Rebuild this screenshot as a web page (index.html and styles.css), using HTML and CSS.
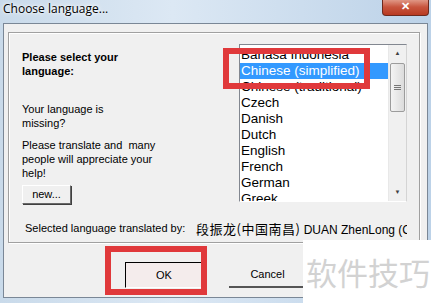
FILE: index.html
```html
<!DOCTYPE html>
<html lang="en">
<head>
  <meta charset="UTF-8">
  <title>Choose language...</title>
  <link rel="stylesheet" href="styles.css">
</head>
<body>
  <div class="window">
    <div class="titlebar">
      <span class="title">Choose language...</span>
      <div class="close-btn">&#x2715;</div>
    </div>

    <div class="client">
      <div class="group">
        <div class="group-top">
          <div class="left-col">
            <p class="prompt">Please select your language:</p>
            <p class="info">Your language is<br>missing?</p>
            <p class="info">Please translate and &nbsp;many people will appreciate your help!</p>
            <button class="btn btn-new">new...</button>
          </div>

          <div class="listbox">
            <ul class="items">
              <li>Bahasa Indonesia</li>
              <li class="selected">Chinese (simplified)</li>
              <li>Chinese (traditional)</li>
              <li>Czech</li>
              <li>Danish</li>
              <li>Dutch</li>
              <li>English</li>
              <li>French</li>
              <li>German</li>
              <li>Greek</li>
            </ul>
            <div class="scrollbar">
              <div class="arrow">&#9650;</div>
              <div class="track">
                <div class="thumb"><span class="grip"></span></div>
              </div>
              <div class="arrow">&#9660;</div>
            </div>
          </div>
        </div>

        <div class="translator">
          <span class="label">Selected language translated by:</span>
          <span class="name"><span class="cjk">段振龙(中国南昌)</span> DUAN ZhenLong (China)</span>
        </div>
      </div>

      <div class="buttons">
        <button class="btn btn-ok">OK</button>
        <button class="btn btn-cancel">Cancel</button>
      </div>
    </div>

    <!-- red marks over the screenshot -->
    <div class="mark mark-list"></div>
    <div class="mark mark-ok"></div>

    <div class="watermark">软件技巧</div>
  </div>
</body>
</html>
```

FILE: styles.css
```css
/* window */
body {
  margin: 0;
  width: 431px;
  height: 303px;
  overflow: hidden;
  font-family: 'Liberation Sans', Arial, sans-serif;
  font-size: 11px;
  color: #000;
}

.window {
  position: relative;
  width: 431px;
  height: 303px;
  background: linear-gradient(90deg, #c9daea 0%, #dce8f4 40%, #bcd2e8 100%);
  display: flex;
  flex-direction: column;
}

.titlebar {
  height: 23px;
  display: flex;
  align-items: flex-start;
  justify-content: space-between;
  padding: 0 2px 0 3px;
}

.title {
  font-family: 'Open Sans', 'DejaVu Sans', sans-serif;
  font-size: 12px;
  line-height: 12px;
  margin-top: 3px;
  text-shadow: 0 0 6px #fff, 0 0 3px #fff;
}

.close-btn {
  width: 45px;
  height: 16px;
  margin-top: -1px;
  background: linear-gradient(#e3a08f, #c8553e 50%, #b83a22);
  border: 1px solid #6d2a1e;
  border-top: none;
  border-radius: 0 0 4px 4px;
  color: #fff;
  font-size: 11px;
  font-weight: bold;
  text-align: center;
  line-height: 15px;
}

.client {
  flex: 1;
  margin: 0 3px 5px 3px;
  background: #f0f0f0;
  border: 1px solid #7a8796;
  padding: 8px 7px 0 4px;
  display: flex;
  flex-direction: column;
}

.group {
  height: 211px;
  box-sizing: border-box;
  border: 1px solid #a0a0a0;
  box-shadow: inset 1px 1px 0 #fff, 1px 1px 0 #fff;
  display: flex;
  flex-direction: column;
  padding: 11px 12px 0 13px;
}

.group-top {
  display: flex;
  justify-content: space-between;
}

.left-col {
  width: 190px;
  padding-top: 6px;
}

.left-col p {
  margin: 0;
  line-height: 14px;
}

.prompt {
  font-weight: bold;
  width: 130px;
  margin-bottom: 24px !important;
}

.info {
  width: 140px;
  margin-bottom: 8px !important;
}

.btn {
  font-family: 'Liberation Sans', Arial, sans-serif;
  font-size: 11px;
  background: #f0f0f0;
  border: 1px solid #fff;
  border-right-color: #696969;
  border-bottom-color: #696969;
  box-shadow: 1px 1px 0 #404040;
  padding: 0;
  color: #000;
}

.btn-new {
  width: 49px;
  height: 19px;
  margin-top: -4px;
}

/* language list */
.listbox {
  width: 166px;
  height: 156px;
  border: 1px solid #828790;
  border-right-color: #d4d4d4;
  border-bottom-color: #fff;
  background: #fff;
  display: flex;
  overflow: hidden;
}

.items {
  list-style: none;
  margin: 0;
  padding: 2px 0 0 0;
  flex: 1;
  font-size: 13.5px;
}

.items li {
  height: 16px;
  line-height: 16px;
  padding-left: 1px;
  white-space: nowrap;
  overflow: hidden;
}

.items li.selected {
  background: #3399ff;
  color: #fff;
}

.scrollbar {
  width: 17px;
  background: #f0f0f0;
  display: flex;
  flex-direction: column;
  border-left: 1px solid #e8e8e8;
}

.arrow {
  height: 17px;
  font-size: 6px;
  line-height: 17px;
  text-align: center;
  color: #404040;
}

.track {
  flex: 1;
}

.thumb {
  height: 47px;
  margin: 1px 1px 0 1px;
  border: 1px solid #9c9c9c;
  border-radius: 2px;
  background: linear-gradient(90deg, #f4f4f4, #dcdcdc);
  display: flex;
  align-items: center;
  justify-content: center;
}

.grip {
  width: 7px;
  height: 5px;
  border-top: 1px solid #777;
  border-bottom: 1px solid #777;
  box-sizing: border-box;
  background: linear-gradient(#777, #777) center / 100% 1px no-repeat;
}

.translator {
  display: flex;
  align-items: center;
  margin-top: 15px;
  white-space: nowrap;
  overflow: hidden;
}

.translator .label {
  flex-shrink: 0;
  padding-left: 3px;
  width: 171px;
}

.translator .name {
  font-family: 'Liberation Sans', 'Noto Sans CJK SC', sans-serif;
  font-size: 12px;
}

.translator .cjk {
  font-family: 'Noto Sans CJK SC', sans-serif;
  font-size: 13px;
  letter-spacing: 0.5px;
}

/* bottom buttons */
.buttons {
  display: flex;
  padding: 19px 0 0 117px;
  gap: 26px;
}

.btn-ok {
  width: 78px;
  height: 26px;
  border: 1px solid #000;
  border-right-color: #fff;
  border-bottom-color: #fff;
  box-shadow: none;
  background: #f4ecec;
}

.btn-cancel {
  width: 77px;
  height: 26px;
  border: none;
  border-bottom: 2px solid #555;
  box-shadow: none;
}

/* annotations */
.mark {
  position: absolute;
  border: 6px solid #e0393b;
  box-sizing: border-box;
}

.mark-list {
  left: 223px;
  top: 48px;
  width: 147px;
  height: 41px;
}

.mark-ok {
  left: 105px;
  top: 246px;
  width: 102px;
  height: 49px;
}

.watermark {
  position: absolute;
  left: 303px;
  top: 240px;
  width: 128px;
  height: 63px;
  background: #fff;
  color: #d2d2d2;
  font-family: 'Noto Sans CJK SC', sans-serif;
  font-size: 31px;
  line-height: 63px;
  padding-left: 3px;
  box-sizing: border-box;
  white-space: nowrap;
}
```
